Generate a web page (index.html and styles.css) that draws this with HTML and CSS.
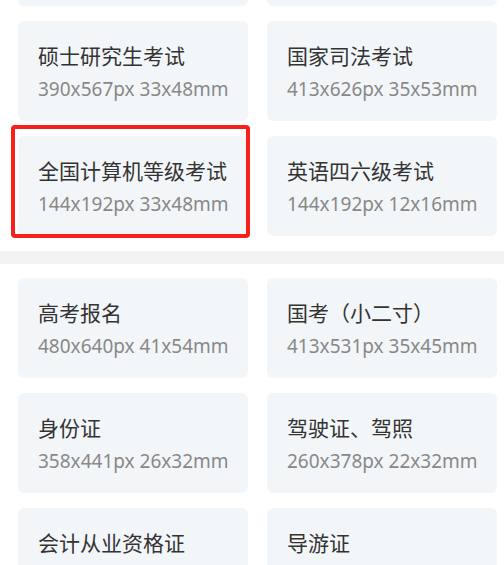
FILE: index.html
```html
<!DOCTYPE html>
<html lang="zh-CN">
<head>
    <meta charset="UTF-8">
    <meta name="viewport" content="width=device-width, initial-scale=1.0">
    <title>证件照规格</title>
    <link rel="stylesheet" href="styles.css">
</head>
<body>
    <div class="section section-first">
        <div class="spec-grid">
            <!-- previous row, scrolled out of view -->
            <div class="spec-card"></div>
            <div class="spec-card"></div>
            <div class="spec-card">
                <div class="spec-name">硕士研究生考试</div>
                <div class="spec-size">390x567px 33x48mm</div>
            </div>
            <div class="spec-card">
                <div class="spec-name">国家司法考试</div>
                <div class="spec-size">413x626px 35x53mm</div>
            </div>
            <div class="spec-card selected">
                <div class="spec-name">全国计算机等级考试</div>
                <div class="spec-size">144x192px 33x48mm</div>
            </div>
            <div class="spec-card">
                <div class="spec-name">英语四六级考试</div>
                <div class="spec-size">144x192px 12x16mm</div>
            </div>
        </div>
    </div>
    <div class="divider"></div>
    <div class="section">
        <div class="spec-grid">
            <div class="spec-card">
                <div class="spec-name">高考报名</div>
                <div class="spec-size">480x640px 41x54mm</div>
            </div>
            <div class="spec-card">
                <div class="spec-name">国考（小二寸）</div>
                <div class="spec-size">413x531px 35x45mm</div>
            </div>
            <div class="spec-card">
                <div class="spec-name">身份证</div>
                <div class="spec-size">358x441px 26x32mm</div>
            </div>
            <div class="spec-card">
                <div class="spec-name">驾驶证、驾照</div>
                <div class="spec-size">260x378px 22x32mm</div>
            </div>
            <div class="spec-card">
                <div class="spec-name">会计从业资格证</div>
            </div>
            <div class="spec-card">
                <div class="spec-name">导游证</div>
            </div>
        </div>
    </div>
</body>
</html>
```

FILE: styles.css
```css
body {
    margin: 0;
    background-color: white;
    font-family: "Noto Sans", "Noto Sans CJK SC", sans-serif;
    overflow: hidden;
}
.section {
    padding: 14px 7px 15px 18px;
}
/* list is scrolled: first row only shows its bottom edge */
.section-first {
    margin-top: -108px;
}
.divider {
    height: 13px;
    background-color: #f3f3f3;
}
.spec-grid {
    display: grid;
    grid-template-columns: 230px 230px;
    grid-auto-rows: 100px;
    column-gap: 19px;
    row-gap: 15px;
}
.spec-card {
    position: relative;
    background-color: #f3f6f9;
    border-radius: 6px;
    padding: 21px 0 0 20px;
    box-sizing: border-box;
}
.spec-card.selected::after {
    content: "";
    position: absolute;
    left: -7px;
    top: -11px;
    right: -2px;
    bottom: -2px;
    border: 4px solid #f5211a;
    border-radius: 4px;
}
.spec-name {
    font-size: 21px;
    line-height: 28px;
    color: #333;
}
.spec-size {
    margin-top: 6px;
    font-size: 19px;
    line-height: 26px;
    color: #888;
}
```
